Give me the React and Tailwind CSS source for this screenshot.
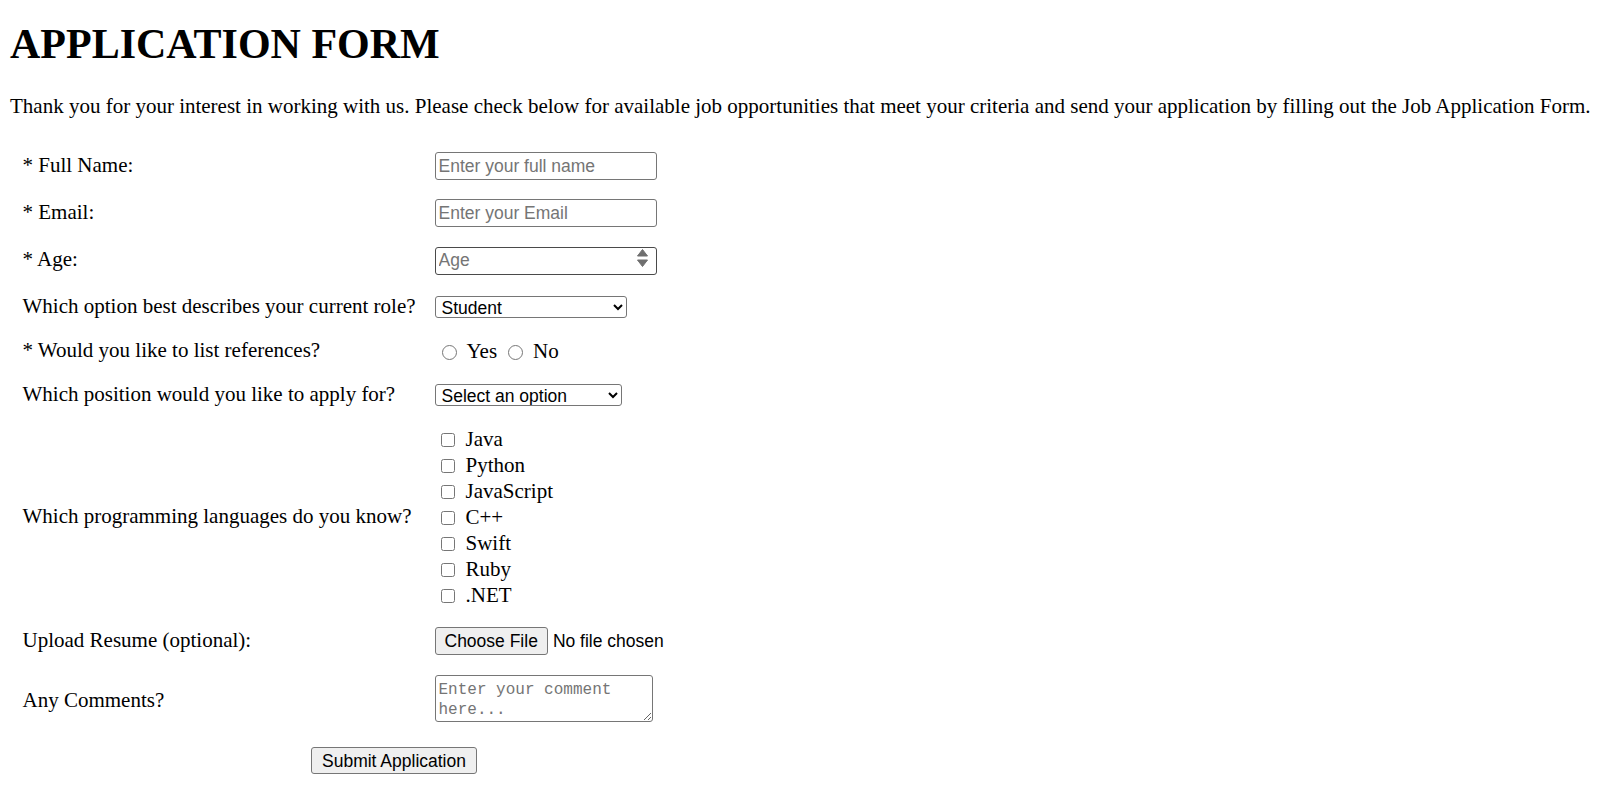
import React from 'react';

const serif = "font-['Liberation_Serif',_'Times_New_Roman',_serif]";
const sans = "font-['Liberation_Sans',_Arial,_sans-serif]";

const languages = ['Java', 'Python', 'JavaScript', 'C++', 'Swift', 'Ruby', '.NET'];

const Row = ({ label, h, children }) => (
  <div className={`flex items-center ${h}`}>
    <div className="w-[412px] shrink-0">{label}</div>
    <div className="flex items-center">{children}</div>
  </div>
);

const textBox = `${sans} w-[222px] h-[28px] border rounded-[3px] px-[3px] text-[17.5px] text-black placeholder:text-[#757575] bg-white`;
const selectBox = `${sans} h-[22px] border border-[#767676] rounded-[3px] pl-[2px] text-[17.5px] leading-[20px] text-black bg-white`;

export default function App() {
  return (
    <div className={`${serif} text-black bg-white min-h-[797px] pl-[10px] text-[21px]`}>
      <h1 className="pt-[20px] leading-[48px] text-[42px] font-bold">APPLICATION FORM</h1>
      <p className="mt-[26px] leading-[24px] whitespace-nowrap">
        Thank you for your interest in working with us. Please check below for available job opportunities that meet your criteria and send your application by filling out the Job Application Form.
      </p>

      <form className="mt-[24.5px] pl-[12.5px]" onSubmit={(e) => e.preventDefault()}>
        <Row label="* Full Name:" h="h-[47px]">
          <input type="text" placeholder="Enter your full name" className={`${textBox} border-[#767676]`} />
        </Row>
        <Row label="* Email:" h="h-[47px]">
          <input type="email" placeholder="Enter your Email" className={`${textBox} border-[#767676]`} />
        </Row>
        <Row label="* Age:" h="h-[47px]">
          <div className="relative">
            <input type="text" placeholder="Age" className={`${textBox} border-[#4a4a4a]`} />
            <svg className="absolute right-[8px] top-[4px]" width="13" height="20" viewBox="0 0 13 20">
              <path d="M6.5 1.5 L11.5 8 L1.5 8 Z" fill="#6f6f6f" stroke="#6f6f6f" strokeLinejoin="round" />
              <path d="M6.5 18.5 L11.5 12 L1.5 12 Z" fill="#6f6f6f" stroke="#6f6f6f" strokeLinejoin="round" />
            </svg>
          </div>
        </Row>
        <Row label="Which option best describes your current role?" h="h-[46px]">
          <select className={`${selectBox} w-[192px]`} defaultValue="Student">
            <option>Student</option>
            <option>Full-Time Job</option>
            <option>Full-Time Learner</option>
            <option>Prefer not to say</option>
            <option>Other</option>
          </select>
        </Row>
        <Row label="* Would you like to list references?" h="h-[43px]">
          <label className="flex items-center ml-[7px] mt-[2px]">
            <input type="radio" name="refs" className="w-[15px] h-[15px] m-0" />
            <span className="ml-[10px]">Yes</span>
          </label>
          <label className="flex items-center ml-[11px] mt-[2px]">
            <input type="radio" name="refs" className="w-[15px] h-[15px] m-0" />
            <span className="ml-[10px]">No</span>
          </label>
        </Row>
        <Row label="Which position would you like to apply for?" h="h-[45px]">
          <select className={`${selectBox} w-[187px]`} defaultValue="">
            <option value="">Select an option</option>
            <option>Frontend Developer</option>
            <option>Backend Developer</option>
            <option>Full Stack Developer</option>
          </select>
        </Row>
        <div className="flex items-center h-[199px]">
          <div className="w-[412px] shrink-0">Which programming languages do you know?</div>
          <div className="flex flex-col pt-[1px]">
            {languages.map((lang) => (
              <label key={lang} className="flex items-center h-[26px] ml-[6px]">
                <input type="checkbox" className="w-[14px] h-[14px] m-0" />
                <span className="ml-[11px]">{lang}</span>
              </label>
            ))}
          </div>
        </div>
        <Row label="Upload Resume (optional):" h="h-[49px]">
          <button type="button" className={`${sans} h-[28px] px-[9px] text-[17.5px] bg-[#efefef] border border-[#767676] rounded-[3px]`}>
            Choose File
          </button>
          <span className={`${sans} ml-[5px] text-[17.5px]`}>No file chosen</span>
        </Row>
        <Row label="Any Comments?" h="h-[71px]">
          <textarea
            placeholder="Enter your comment here..."
            className="font-['Liberation_Mono',_monospace] -mt-[6px] w-[218px] h-[47px] border border-[#767676] rounded-[3px] px-[3px] pt-[4px] pb-[1px] text-[16px] leading-[20px] placeholder:text-[#757575] resize"
          />
        </Row>
        <div className="h-[47px] flex items-center">
          <button type="submit" className={`${sans} ml-[288.5px] h-[27px] px-[10px] text-[17.5px] bg-[#efefef] border border-[#767676] rounded-[3px]`}>
            Submit Application
          </button>
        </div>
      </form>
    </div>
  );
}
